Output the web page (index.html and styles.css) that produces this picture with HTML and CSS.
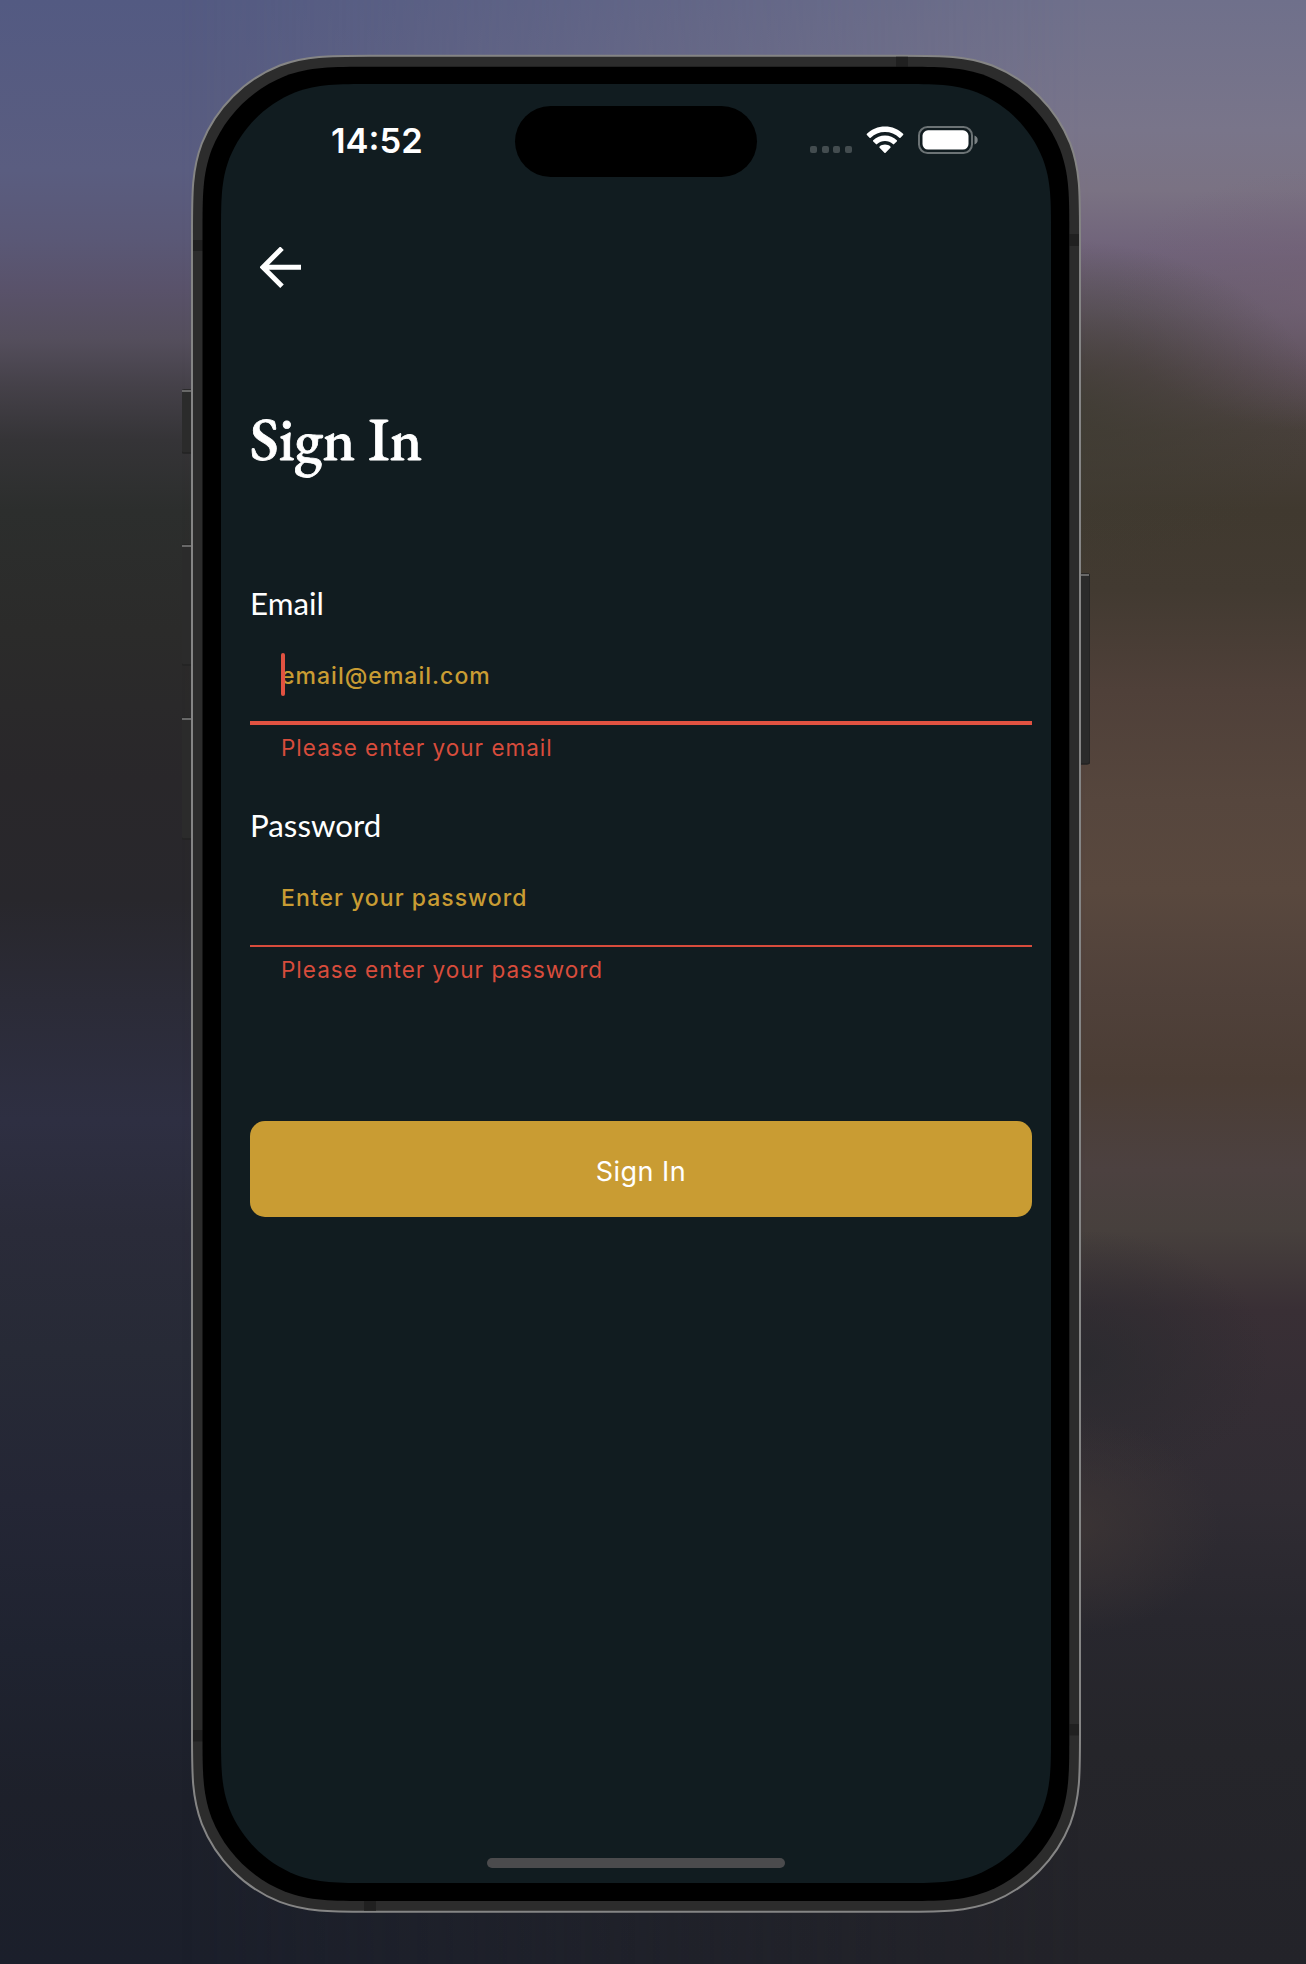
FILE: index.html
```
<!DOCTYPE html>
<html lang="en">
<head>
<meta charset="utf-8">
<title>Sign In</title>
<link rel="stylesheet" href="styles.css">
</head>
<body>
<div class="wallpaper"></div>
<main class="phone">
  <svg class="bezel" id="bezel" width="908" height="1964" viewBox="182 0 908 1964" aria-hidden="true">
    <g fill="#2b2b2b" stroke="#232323" stroke-width="1.5">
      <rect x="181" y="390" width="14" height="63" rx="3"/>
      <rect x="181" y="545" width="14" height="120" rx="3"/>
      <rect x="181" y="718" width="14" height="121" rx="3"/>
      <rect x="1076" y="574" width="14" height="190" rx="3"/>
    </g>
    <path d="M182 391H192M182 546H192M182 719H192M1080 575H1089" stroke="#686868" stroke-width="2"/>
    <path id="outer" fill="#2c2c2c" stroke="#858585" stroke-width="2"/>
    <path d="M193 240h10v11h-10zM1069.500 234h9.500v12h-9.500zM896 56.700h12v10h-12zM193 1730h10v11.500h-10zM1069.500 1724h9.500v11.500h-9.500zM364 1901h12v9.700h-12z" fill="#202020"/>
    <path id="rim" fill="#000"/>
    <path id="glass" fill="#111c20"/>
  </svg>
  <section class="screen">
    <header class="status">
      <time class="clock">14:52</time>
      <div class="island"></div>
      <div class="indicators">
        <div class="dots"><i></i><i></i><i></i><i></i></div>
        <svg class="wifi" width="38" height="28" viewBox="0 0 38 28" fill="#fff">
          <path d="M19 0.500C26 0.500 32.500 3.200 37.100 7.800c.4.400.4.800 0 1.200l-2.600 2.700c-.4.400-.8.400-1.200 0C29.500 8 24.500 6 19 6S8.500 8 4.700 11.700c-.4.400-.8.400-1.200 0L.9 9c-.4-.4-.4-.8 0-1.200C5.500 3.200 12 .5 19 .5z"/>
          <path d="M19 9.600c4.500 0 8.700 1.700 11.800 4.700.4.400.4.800 0 1.200l-2.700 2.600c-.4.400-.8.400-1.200 0C24.700 16.100 22 15 19 15s-5.700 1.100-7.900 3.100c-.4.400-.8.400-1.200 0l-2.700-2.600c-.4-.4-.4-.8 0-1.200 3.100-3 7.300-4.700 11.800-4.700z"/>
          <path d="M19 18.600c2.100 0 4 .7 5.400 1.900.4.400.4.900 0 1.300l-4.800 4.900c-.4.400-.8.400-1.200 0l-4.800-4.900c-.4-.4-.4-.9 0-1.300 1.400-1.200 3.300-1.900 5.400-1.900z"/>
        </svg>
        <svg class="battery" width="60" height="28" viewBox="0 0 60 28">
          <rect x="1" y="1" width="53" height="26" rx="8.500" fill="none" stroke="#6c7375" stroke-width="2"/>
          <rect x="4.500" y="4.300" width="46" height="19.200" rx="5.500" fill="#fff"/>
          <path d="M56.500 9.500c2 .7 3.200 2.300 3.200 4.500s-1.200 3.800-3.200 4.500z" fill="#7c8284"/>
        </svg>
      </div>
    </header>
    <nav class="topbar">
      <svg width="42" height="42" viewBox="0 0 42 42" fill="none" stroke="#fff" stroke-width="5"><path d="M41 20.200H4M22 1.200L3 20.200L22 39.200"/></svg>
    </nav>
    <form class="form">
      <h1 class="title">Sign In</h1>
      <label class="label">Email</label>
      <div class="input focused"><span class="caret"></span><span class="hint">email@email.com</span></div>
      <p class="error">Please enter your email</p>
      <label class="label">Password</label>
      <div class="input"><span class="hint">Enter your password</span></div>
      <p class="error">Please enter your password</p>
      <button class="submit" type="button">Sign In</button>
    </form>
    <div class="home"></div>
  </section>
</main>
<script src="frame.js"></script>
</body>
</html>
```
FILE: frame.js
```
// Rounded rectangle whose corners ease into the straight sides.
function squircle(x0, y0, x1, y1, r) {
  const c = [[1.28, 0], [0.98, 0], [0.82, 0], [0.6315, 0.0704], [0.376, 0.172], [0.172, 0.376], [0.0704, 0.6315], [0, 0.82], [0, 0.98], [0, 1.28]];
  const corner = (cx, cy, sx, sy, reverse) => {
    const p = (reverse ? [...c].reverse() : c).map(([a, b]) => `${cx + sx * a * r} ${cy + sy * b * r}`);
    return `${p[0]}C${p.slice(1, 4).join(' ')}C${p.slice(4, 7).join(' ')}C${p.slice(7).join(' ')}`;
  };
  return `M${corner(x0, y0, 1, 1, true)}L${corner(x1, y0, -1, 1, false)}L${corner(x1, y1, -1, -1, true)}L${corner(x0, y1, 1, -1, false)}Z`;
}
document.getElementById('outer').setAttribute('d', squircle(192, 55.7, 1080, 1911.7, 139));
document.getElementById('rim').setAttribute('d', squircle(202.5, 66.7, 1069.3, 1901, 131));
document.getElementById('glass').setAttribute('d', squircle(221, 84, 1051, 1883, 118));
```
FILE: styles.css
```
* { box-sizing: border-box; }
body { margin: 0; width: 1306px; height: 1964px; overflow: hidden; background: #24242c; font-family: Inter, sans-serif; color: #fff; }
.wallpaper { position: absolute; inset: 0; background: linear-gradient(180deg, #535a82 0, #5a5d80 170px, #5a5876 240px, #59526a 290px, #544e5c 340px, #454149 385px, #353437 440px, #2c2e2d 510px, #2b2b2a 630px, #29272a 780px, #28272c 900px, #2b2b37 1000px, #2e2f42 1120px, #2a2b39 1230px, #272a36 1350px, #242635 1500px, #1f2330 1650px, #1d202a 1800px, #1b1f2b 1964px); }
.wallpaper::after { content: ""; position: absolute; inset: 0; background: radial-gradient(ellipse 150px 110px at 1070px 1525px, rgba(62,54,53,.8), transparent), radial-gradient(ellipse 190px 130px at 1080px 1360px, rgba(41,42,46,.8), transparent), radial-gradient(ellipse 260px 170px at 1060px 410px, rgba(62,59,49,.8), transparent), radial-gradient(ellipse 210px 130px at 1320px 300px, rgba(116,98,118,.65), transparent), linear-gradient(180deg, #6f708b 0, #79758a 130px, #7a7283 190px, #70637a 250px, #655a69 310px, #564a50 370px, #48403b 430px, #40392f 510px, #423a31 590px, #4f4039 690px, #56463d 800px, #59483e 890px, #50413a 990px, #4b3d35 1080px, #4c4140 1170px, #47403d 1230px, #392f35 1310px, #342d34 1400px, #302c33 1500px, #28272e 1620px, #25252a 1750px, #232329 1964px); -webkit-mask-image: linear-gradient(90deg, transparent 180px, #000 1090px); mask-image: linear-gradient(90deg, transparent 180px, #000 1090px); }
.phone { position: relative; width: 908px; height: 1964px; margin-left: 182px; padding: 84px 39px 81px; }
.bezel { position: absolute; inset: 0; }
.screen { position: relative; width: 830px; height: 1799px; display: flex; flex-direction: column; }
.status { height: 113px; padding-top: 22px; display: grid; grid-template-columns: 294px 242px 1fr; }
.clock { padding: 14px 0 0 110px; font-size: 34.500px; line-height: 42px; font-weight: 600; }
.island { width: 242px; height: 71px; border-radius: 36px; background: #000; }
.indicators { display: flex; padding: 20px 0 0 53px; height: 48px; }
.dots { display: flex; gap: 4.6px; padding-top: 20px; width: 56px; }
.dots i { width: 7px; height: 7px; border-radius: 2px; background: #434c4f; }
.wifi { margin-right: 14px; }
.topbar { height: 131px; padding: 50px 0 0 39px; }
.topbar svg { display: block; }
.form { display: flex; flex-direction: column; padding: 0 19px 0 29px; }
.title { margin: 76px 0 0; height: 174px; font: 500 60.700px/70px "EB Garamond", "Liberation Serif", serif; -webkit-text-stroke: .8px #fff; }
.label { height: 50px; font: 400 31.300px/50px Lato, sans-serif; }
.input { height: 97px; padding: 1px 0 0 31px; display: flex; align-items: center; border-bottom: 2px solid #d84c3c; font-size: 23px; font-weight: 500; color: #c99c33; position: relative; }
.focused { padding-top: 2px; border-bottom: 4px solid #e15241; }
.caret { position: absolute; left: 31px; top: 25px; width: 4px; height: 43px; border-radius: 2px; background: #e15241; }
.hint { letter-spacing: 1.030px; }
.error { margin: 0; padding-left: 31px; height: 75px; font-size: 22.500px; line-height: 45px; color: #d84c3c; letter-spacing: 1px; }
.submit { margin-top: 99px; height: 96px; padding: 4px 0 0; border: 0; border-radius: 15px; background: #c99c33; color: #fff; font: 400 27px Inter, sans-serif; letter-spacing: .5px; }
.home { position: absolute; left: 266px; bottom: 15px; width: 298px; height: 10px; border-radius: 5px; background: #4b4b4d; }
```
